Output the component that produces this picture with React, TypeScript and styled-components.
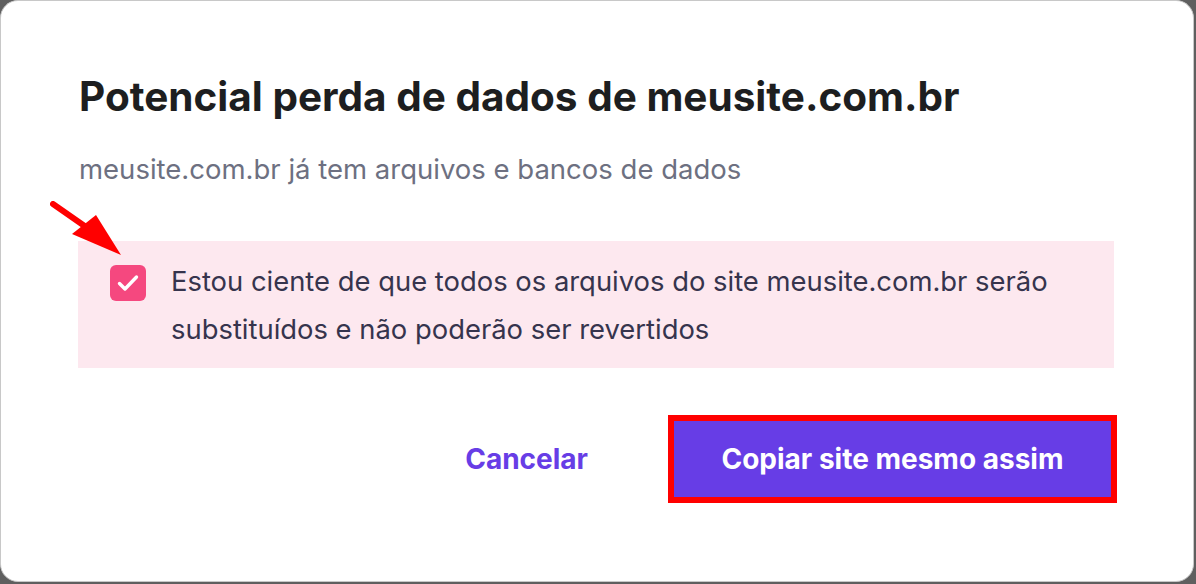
import styled, { createGlobalStyle } from "styled-components";

const GlobalStyle = createGlobalStyle`
  html, body {
    margin: 0;
    padding: 0;
    background: #5f5f5f;
    font-family: "Inter", "DejaVu Sans", sans-serif;
  }
`;

const ArrowIcon = () => (
    <ArrowSvg width="90" height="70" viewBox="0 0 90 70">
        <line x1="3" y1="3" x2="36" y2="26" stroke="#ff0000" strokeWidth="6" strokeLinecap="round" />
        <polygon points="71,54 22,33 46,14" fill="#ff0000" />
    </ArrowSvg>
);

const CheckIcon = () => (
    <svg width="26" height="26" viewBox="0 0 26 26">
        <path d="M4.5 13.5 L10 19 L21.5 7" fill="none" stroke="#fff" strokeWidth="3.4" strokeLinecap="round" strokeLinejoin="round" />
    </svg>
);

export default function App() {
    return (
        <>
            <GlobalStyle />
            <Dialog>
                <Title>Potencial perda de dados de meusite.com.br</Title>
                <Subtitle>meusite.com.br já tem arquivos e bancos de dados</Subtitle>
                <Warning>
                    <ArrowIcon />
                    <Checkbox>
                        <CheckIcon />
                    </Checkbox>
                    <WarningText>
                        Estou ciente de que todos os arquivos do site meusite.com.br serão substituídos e não poderão ser revertidos
                    </WarningText>
                </Warning>
                <Actions>
                    <TextButton>Cancelar</TextButton>
                    <Highlight>
                        <PrimaryButton>Copiar site mesmo assim</PrimaryButton>
                    </Highlight>
                </Actions>
            </Dialog>
        </>
    );
}

const Dialog = styled.div`
    box-sizing: border-box;
    width: 1194px;
    height: 582px;
    margin: 0 2px 2px 0;
    background: #fff;
    border: 1px solid #c8c8c8;
    border-radius: 18px;
    padding: 71px 80px 0 77px;
    display: flex;
    flex-direction: column;
`

const Title = styled.h1`
    margin: 0;
    font-size: 40.5px;
    font-weight: 700;
    color: #1d1e20;
    line-height: 50px;
    padding-left: 1px;
`

const Subtitle = styled.p`
    margin: 31px 0 0 1px;
    font-size: 27.5px;
    color: #6d7081;
    line-height: 32px;
`

const Warning = styled.div`
    position: relative;
    margin-top: 56px;
    background: #fde8ef;
    padding: 24px 32px 15px 32px;
    display: flex;
    align-items: flex-start;
    gap: 25px;
    width: 1036px;
    box-sizing: border-box;
`

const ArrowSvg = styled.svg`
    position: absolute;
    left: -28px;
    top: -40px;
`

const Checkbox = styled.div`
    flex: 0 0 auto;
    width: 36px;
    height: 36px;
    border-radius: 6px;
    background: #f5487f;
    display: flex;
    align-items: center;
    justify-content: center;
`

const WarningText = styled.p`
    margin: -8px 0 0 0;
    font-size: 27.4px;
    line-height: 48px;
    color: #36344d;
    max-width: 900px;
`

const Actions = styled.div`
    margin-top: 47px;
    display: flex;
    justify-content: flex-end;
    align-items: center;
    gap: 80px;
    width: 1039px;
`

const TextButton = styled.button`
    border: none;
    background: none;
    padding: 0;
    font-family: inherit;
    font-size: 28px;
    font-weight: 700;
    color: #673de6;
`

const Highlight = styled.div`
    border: 6px solid #ff0000;
`

const PrimaryButton = styled.button`
    display: block;
    border: none;
    background: #673de6;
    color: #fff;
    font-family: inherit;
    font-size: 28px;
    font-weight: 700;
    width: 437px;
    height: 76px;
`
